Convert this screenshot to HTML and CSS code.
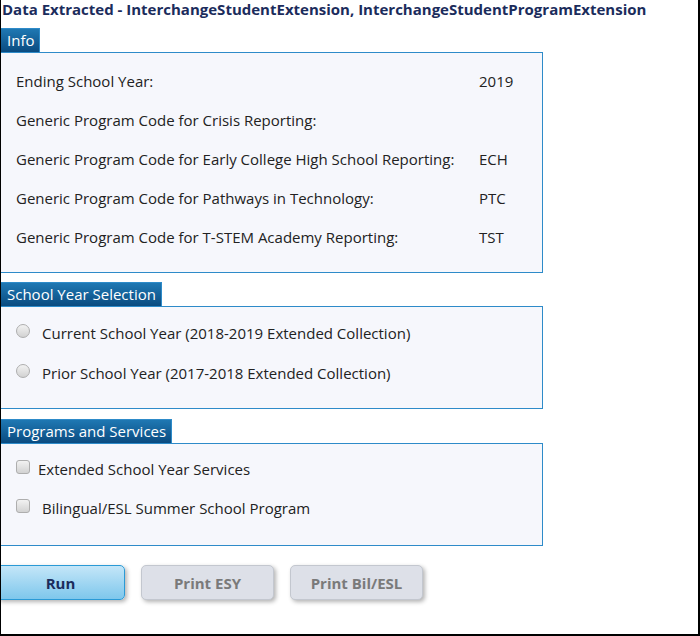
FILE: index.html
```html
<!DOCTYPE html>
<html lang="en">
<head>
    <meta charset="UTF-8">
    <title>Data Extracted</title>
    <link rel="stylesheet" href="styles.css">
</head>
<body>
    <div class="page">
        <div class="title">Data Extracted - InterchangeStudentExtension, InterchangeStudentProgramExtension</div>

        <div class="section info">
            <div class="tab">Info</div>
            <div class="panel">
                <div class="info-grid">
                    <div>Ending School Year:</div><div>2019</div>
                    <div>Generic Program Code for Crisis Reporting:</div><div></div>
                    <div>Generic Program Code for Early College High School Reporting:</div><div>ECH</div>
                    <div>Generic Program Code for Pathways in Technology:</div><div>PTC</div>
                    <div>Generic Program Code for T-STEM Academy Reporting:</div><div>TST</div>
                </div>
            </div>
        </div>

        <div class="section years">
            <div class="tab">School Year Selection</div>
            <div class="panel">
                <label class="option"><input type="radio" name="year"><span>Current School Year (2018-2019 Extended Collection)</span></label>
                <label class="option"><input type="radio" name="year"><span>Prior School Year (2017-2018 Extended Collection)</span></label>
            </div>
        </div>

        <div class="section programs">
            <div class="tab">Programs and Services</div>
            <div class="panel">
                <label class="option"><input type="checkbox"><span class="tight">Extended School Year Services</span></label>
                <label class="option"><input type="checkbox"><span>Bilingual/ESL Summer School Program</span></label>
            </div>
        </div>

        <div class="button-row">
            <button class="btn run">Run</button>
            <button class="btn disabled">Print ESY</button>
            <button class="btn disabled">Print Bil/ESL</button>
        </div>
    </div>
</body>
</html>
```

FILE: styles.css
```css
body {
    margin: 0;
    font-family: "Open Sans", Arial, sans-serif;
    font-size: 15px;
    color: #222;
    background: #fff;
}

.page {
    height: 636px;
    box-sizing: border-box;
    border-left: 1px solid #000;
    border-right: 2px solid #000;
    border-bottom: 2px solid #000;
    overflow: hidden;
}

.title {
    font-weight: bold;
    color: #1b2c5c;
    line-height: 18px;
    padding-left: 1px;
    white-space: nowrap;
}

.section {
    width: 543px;
    margin-left: -1px;
}

.info {
    margin-top: 10px;
}

.years {
    margin-top: 9px;
}

.programs {
    margin-top: 10px;
}

.tab {
    display: inline-block;
    height: 24px;
    box-sizing: border-box;
    padding: 0 5px 0 6px;
    line-height: 22px;
    font-size: 15px;
    color: #fff;
    background: linear-gradient(to bottom, #1f78b3, #0a4b80);
    border: 1px solid #2e8bc9;
    border-bottom: none;
    vertical-align: bottom;
}

.panel {
    border: 1px solid #2e8bc9;
    background: #f6f7fc;
    box-sizing: border-box;
}

.info .panel {
    height: 221px;
    padding: 18px 0 0 15px;
}

.info-grid {
    display: grid;
    grid-template-columns: 463px auto;
    row-gap: 19px;
    line-height: 20px;
}

.years .panel,
.programs .panel {
    height: 103px;
    padding: 16px 0 0 15px;
    display: flex;
    flex-direction: column;
    gap: 20px;
}

.programs .panel {
    padding-top: 15px;
    gap: 19px;
}

.option {
    display: flex;
    align-items: center;
    line-height: 20px;
}

.option span {
    margin-left: 12px;
}

.option span.tight {
    margin-left: 8px;
}

.option input {
    appearance: none;
    -webkit-appearance: none;
    margin: 0;
    width: 14px;
    height: 14px;
    border: 1px solid #aeaeae;
    background: linear-gradient(to bottom, #f2f2f2, #d2d2d2);
    box-sizing: border-box;
    position: relative;
    top: -2px;
}

.option input[type="radio"] {
    border-radius: 50%;
}

.option input[type="checkbox"] {
    border-radius: 3px;
}

.button-row {
    display: flex;
    gap: 16px;
    margin-top: 19px;
    margin-left: -5px;
}

.btn {
    height: 35px;
    font-family: "Open Sans", Arial, sans-serif;
    font-size: 15px;
    font-weight: bold;
    border-radius: 5px;
    cursor: pointer;
    box-shadow: 2px 2px 4px rgba(0, 0, 0, 0.3);
}

.run {
    width: 129px;
    color: #1b2c5c;
    background: linear-gradient(to bottom, #c4e6f8, #7ec7ec);
    border: 1px solid #2a9ad6;
}

.disabled {
    width: 133px;
    color: #7a7a7a;
    background: #dde0e8;
    border: 1px solid #c3c7cf;
}
```
